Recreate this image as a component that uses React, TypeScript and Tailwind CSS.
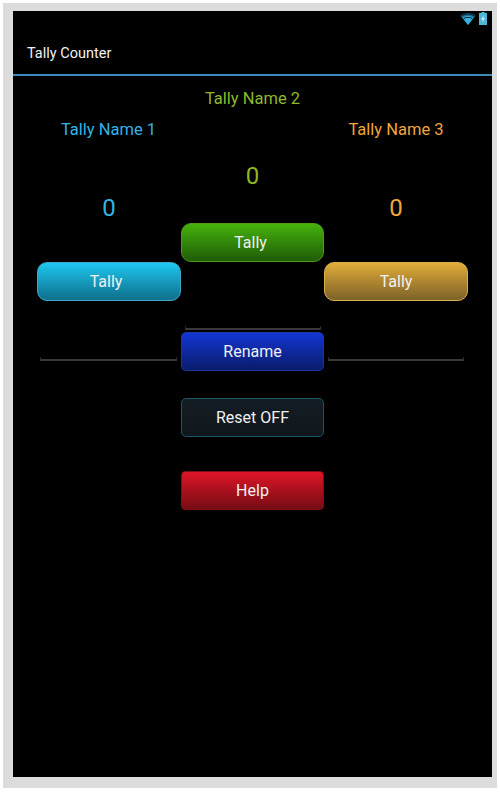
const font = { fontFamily: 'Roboto, "Noto Sans", sans-serif' };

function WifiIcon() {
  return (
    <svg width="16" height="13" viewBox="0 0 15 12">
      <path d="M0.5 3.6 C4.5 0 10.5 0 14.5 3.6 L7.5 12 Z" fill="#1f6f9c" />
      <path d="M2.6 5.2 C5.4 3 9.6 3 12.4 5.2 L7.5 12 Z" fill="#33b5e5" />
      <path d="M1.4 3.9 C4.9 1 10.1 1 13.6 3.9" stroke="#000" strokeWidth="0.8" fill="none" />
      <path d="M3.4 6.2 C5.8 4.5 9.2 4.5 11.6 6.2" stroke="#000" strokeWidth="0.8" fill="none" />
    </svg>
  );
}

function BatteryIcon() {
  return (
    <svg width="8" height="13" viewBox="0 0 8 13">
      <rect x="2.5" y="0" width="3" height="1.5" fill="#5fc4e4" />
      <rect x="0" y="1" width="8" height="12" fill="#4fb6d8" />
      <path d="M4.8 2.8 L2.4 7.4 H3.9 L3.2 10.8 L5.7 6 H4.2 Z" fill="#e8f8fc" />
    </svg>
  );
}

// holo-style edit text underline with little end ticks
function EditLine({ className }: { className: string }) {
  return <div className={`h-[4px] border-x border-b-2 border-x-[#2a2a2a] border-b-[#383838] ${className}`} />;
}

function GlossButton({ label, className }: { label: string; className: string }) {
  return (
    <button className={`h-[39px] w-full border text-[16px] leading-none text-[#f0f0f0] ${className}`}>
      {label}
    </button>
  );
}

export default function App() {
  return (
    <div style={font} className="h-[800px] w-[500px] bg-white pl-[3px] pt-[3px]">
      <div className="h-[785px] w-[494px] bg-[#dcdcdc] pl-[10px] pt-[8px]">
        <div className="flex h-[766px] w-[479px] flex-col bg-black">
          <div className="flex h-[16px] items-start justify-end gap-[3px] pr-[5px] pt-[1px]">
            <WifiIcon />
            <BatteryIcon />
          </div>
          <div className="flex h-[47px] items-center pl-[14px] pt-[7px] text-[14.5px] text-[#f2f2f2]">
            Tally Counter
          </div>
          <div className="h-[2px] bg-[#3b8ab8]" />

          <div className="grid grid-cols-[144px_143px_144px] pl-[24px]">
            <div className="flex flex-col items-center pt-[44px]">
              <div className="h-[19px] pr-[1px] text-[16.5px] leading-[19px] text-[#33b5e5]">Tally Name 1</div>
              <div className="mt-[55px] h-[28px] text-[24px] leading-[28px] text-[#33b5e5]">0</div>
              <div className="mt-[40px] w-full">
                <GlossButton
                  label="Tally"
                  className="rounded-[10px] border-[#3fa9c9] bg-gradient-to-b from-[#1ec8f0] to-[#0f6f8c] pr-[6px]"
                />
              </div>
              <EditLine className="mr-[4px] ml-[3px] mt-[56px] w-[137px]" />
            </div>

            <div className="flex flex-col items-center pt-[13px]">
              <div className="h-[19px] text-[16.5px] leading-[19px] text-[#8fb82a]">Tally Name 2</div>
              <div className="mt-[54px] h-[28px] text-[24px] leading-[28px] text-[#8fb81f]">0</div>
              <div className="mt-[33px] w-full">
                <GlossButton
                  label="Tally"
                  className="rounded-[10px] border-[#4f9c1c] bg-gradient-to-b from-[#46b30c] to-[#1f5c06] pr-[4px]"
                />
              </div>
              <EditLine className="mt-[64px] w-[136px]" />
              <div className="mt-[2px] w-full">
                <GlossButton
                  label="Rename"
                  className="rounded-[5px] border-[#1a36a0] bg-gradient-to-b from-[#1236d4] to-[#0a1c6c]"
                />
              </div>
              <div className="mt-[27px] w-full">
                <GlossButton
                  label="Reset OFF"
                  className="rounded-[5px] border-[#1c5468] bg-gradient-to-b from-[#141d24] to-[#10171c]"
                />
              </div>
              <div className="mt-[34px] w-full">
                <GlossButton
                  label="Help"
                  className="rounded-[4px] border-[#7a1018] bg-gradient-to-b from-[#e01428] to-[#760c14]"
                />
              </div>
            </div>

            <div className="flex flex-col items-center pt-[44px]">
              <div className="h-[19px] text-[16.5px] leading-[19px] text-[#f0a63a]">Tally Name 3</div>
              <div className="mt-[55px] h-[28px] text-[24px] leading-[28px] text-[#f0a63a]">0</div>
              <div className="mt-[40px] w-full">
                <GlossButton
                  label="Tally"
                  className="rounded-[10px] border-[#d8b04e] bg-gradient-to-b from-[#e2ac38] to-[#7d6228]"
                />
              </div>
              <EditLine className="ml-[4px] mt-[56px] w-[136px] self-start" />
            </div>
          </div>
        </div>
      </div>
    </div>
  );
}
